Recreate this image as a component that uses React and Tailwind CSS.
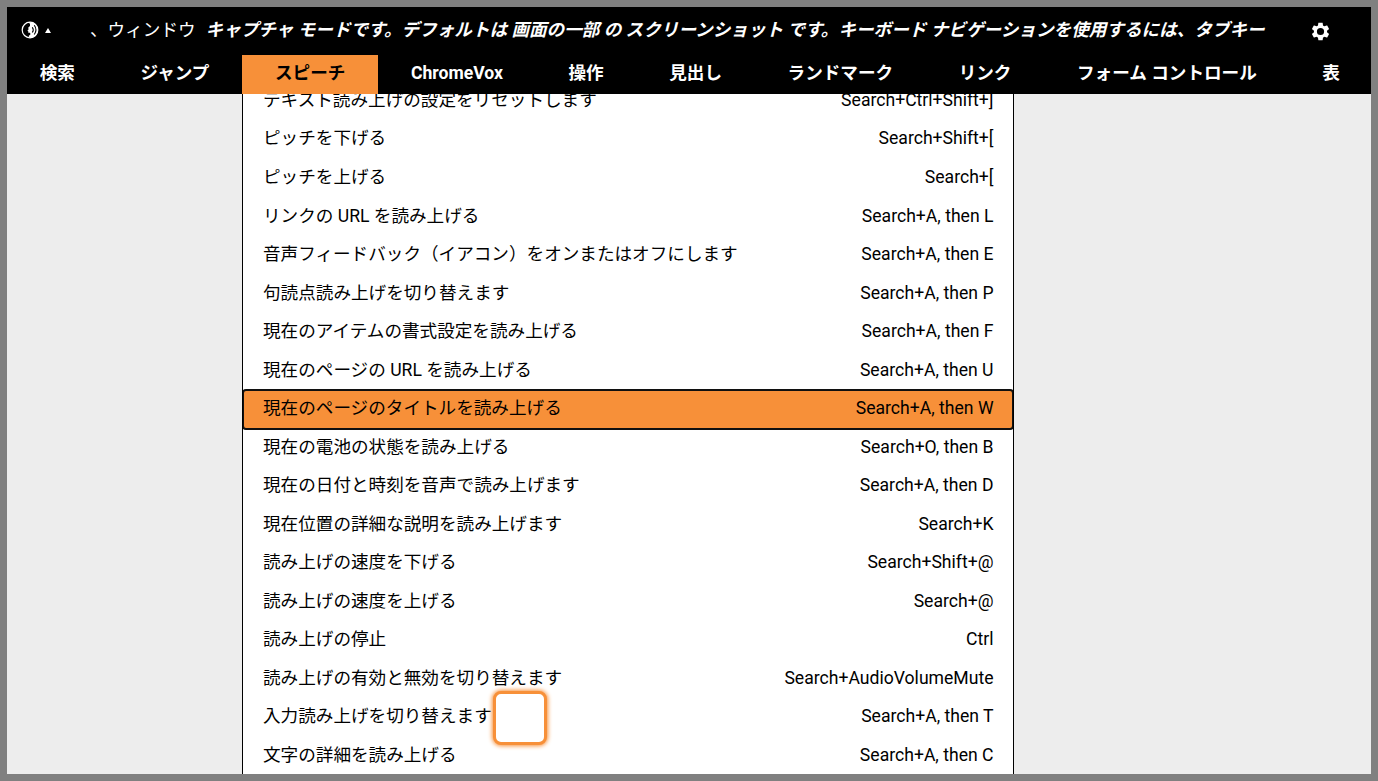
const tabs = [
  '検索', 'ジャンプ', 'スピーチ', 'ChromeVox', '操作', '見出し',
  'ランドマーク', 'リンク', 'フォーム コントロール', '表',
];

const rows = [
  ['テキスト読み上げの設定をリセットします', 'Search+Ctrl+Shift+]'],
  ['ピッチを下げる', 'Search+Shift+['],
  ['ピッチを上げる', 'Search+['],
  ['リンクの URL を読み上げる', 'Search+A, then L'],
  ['音声フィードバック（イアコン）をオンまたはオフにします', 'Search+A, then E'],
  ['句読点読み上げを切り替えます', 'Search+A, then P'],
  ['現在のアイテムの書式設定を読み上げる', 'Search+A, then F'],
  ['現在のページの URL を読み上げる', 'Search+A, then U'],
  ['現在のページのタイトルを読み上げる', 'Search+A, then W'],
  ['現在の電池の状態を読み上げる', 'Search+O, then B'],
  ['現在の日付と時刻を音声で読み上げます', 'Search+A, then D'],
  ['現在位置の詳細な説明を読み上げます', 'Search+K'],
  ['読み上げの速度を下げる', 'Search+Shift+@'],
  ['読み上げの速度を上げる', 'Search+@'],
  ['読み上げの停止', 'Ctrl'],
  ['読み上げの有効と無効を切り替えます', 'Search+AudioVolumeMute'],
  ['入力読み上げを切り替えます', 'Search+A, then T'],
  ['文字の詳細を読み上げる', 'Search+A, then C'],
];

function SpeechIcon() {
  return (
    <svg viewBox="0 0 18 18" className="size-[18px] shrink-0" fill="none">
      <circle cx="9" cy="9" r="7.800" stroke="#fff" strokeWidth="1.200" />
      <path d="M7.500 1.300C13.500 .7 16.800 4.500 16.800 9s-3.300 8-8.300 7.800L7.700 14.900l1.800-1.700-.5-1.500H7.200l.2-1.200-1-.8L7.500 8.500 7.300 6.400 9 5V3z" fill="#fff" />
      <path d="M11.300 6.300q1.900 2.600 0 5.200M13.300 4.300q3.300 4.600 0 9.200" stroke="#000" strokeWidth="1.100" />
    </svg>
  );
}

function GearIcon() {
  return (
    <svg viewBox="0 0 24 24" className="size-[21px]" fill="#fff">
      <path d="M19.43 12.98c.04-.32.07-.64.07-.98s-.03-.66-.07-.98l2.110-1.650c.19-.15.24-.42.12-.64l-2-3.460c-.12-.22-.39-.3-.61-.22l-2.490 1c-.52-.4-1.080-.73-1.690-.98l-.38-2.650C14.460 2.180 14.250 2 14 2h-4c-.25 0-.46.18-.49.42l-.38 2.650c-.61.25-1.170.59-1.690.98l-2.490-1c-.23-.09-.49 0-.61.22l-2 3.460c-.13.22-.07.49.12.64l2.110 1.650c-.04.32-.07.65-.07.98s.03.66.07.98l-2.110 1.650c-.19.15-.24.42-.12.64l2 3.460c.12.22.39.3.61.22l2.490-1c.52.4 1.080.73 1.690.98l.38 2.650c.03.24.24.42.49.42h4c.25 0 .46-.18.49-.42l.38-2.650c.61-.25 1.170-.59 1.690-.98l2.490 1c.23.09.49 0 .61-.22l2-3.460c.12-.22.07-.49-.12-.64l-2.110-1.650zM12 16.100a4.100 4.100 0 1 1 0-8.200 4.100 4.100 0 0 1 0 8.200z" />
    </svg>
  );
}

export default function App() {
  return (
    <div className="relative flex h-[781px] w-[1378px] flex-col overflow-hidden border-[7px] border-[#808080] bg-[#ededed] font-[Roboto,'Noto_Sans_CJK_JP',sans-serif] text-[17.600px] text-black">
      <header className="h-[87px] shrink-0 bg-black text-white">
        <div className="flex h-12 items-start pl-[14px]">
          <div className="flex h-[46px] items-center">
            <SpeechIcon />
            <svg viewBox="0 0 6 5" className="ml-[6px] h-[5px] w-[6px]"><path d="M3 0l3 5H0z" fill="#fff" /></svg>
          </div>
          <div className="ml-[39px] flex h-[46px] w-[1210px] items-center whitespace-pre leading-6">
            <span>、ウィンドウ</span>
            <span className="ml-[10px] font-bold italic">キャプチャ モードです。デフォルトは 画面の一部 の スクリーンショット です。キーボード ナビゲーションを使用するには、タブキー</span>
          </div>
          <button className="mt-[14px] ml-[9.500px]"><GearIcon /></button>
        </div>
        <nav className="flex h-[39px]">
          {tabs.map((tab) => (
            <div
              key={tab}
              className={`flex shrink-0 items-center px-[32.780px] pb-[2px] font-bold whitespace-nowrap ${tab === 'スピーチ' ? 'bg-[#f79039] text-black' : ''}`}
            >
              {tab}
            </div>
          ))}
        </nav>
      </header>
      <main className="ml-[235px] h-[680px] w-[772px] overflow-hidden border-x border-black bg-white">
        <div className="-mt-[12.100px]">
          {rows.map(([label, keys], i) => (
            <div
              key={label}
              className={`flex h-[38.530px] items-center justify-between pr-[19.500px] pb-[2px] pl-[20px] whitespace-nowrap ${i === 8 ? 'relative rounded-[3px] bg-[#f79039] outline-2 -outline-offset-1 outline-[#101010]' : ''}`}
            >
              <span>{label}</span>
              <span>{keys}</span>
            </div>
          ))}
        </div>
      </main>
      <div className="absolute top-[684px] left-[486px] h-[54px] w-[54px] rounded-[8px] border-[3px] border-[#f79039] bg-white shadow-[0_0_4px_1px_#f79039]" />
    </div>
  );
}
